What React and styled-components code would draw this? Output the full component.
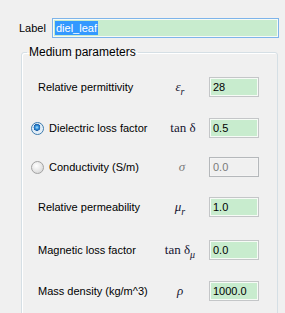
import React from 'react';
import styled, { createGlobalStyle } from 'styled-components';

const Global = createGlobalStyle`
  html, body {
    margin: 0;
    background: #f0f0f0;
  }
  body {
    font-family: "Liberation Sans", Arial, sans-serif;
    font-size: 11px;
    color: #000;
  }
`;

const Page = styled.div`
  padding-top: 18px;
  width: 285px;
`;

const LabelRow = styled.div`
  display: grid;
  grid-template-columns: 33px 227px;
  align-items: center;
  padding-left: 19px;
`;

const Field = styled.div`
  box-sizing: border-box;
  height: 20px;
  display: flex;
  align-items: center;
  padding-left: ${(p) => (p.$focus ? '2px' : '3px')};
  border: 1px solid ${(p) => (p.$focus ? '#7eb4ea' : p.$disabled ? '#b5b8bb' : '#c4c6c8')};
  box-shadow: inset 0 0 0 1px ${(p) => (p.$disabled ? '#f4f4f4' : '#f6fbf6')};
  background: ${(p) => (p.$disabled ? '#f0f0f0' : '#c8ecce')};
  color: ${(p) => (p.$disabled ? '#7a7a7a' : '#000')};
  white-space: nowrap;
`;

const Selected = styled.span`
  background: #3399ff;
  color: #fff;
  padding: 0 1px;
  line-height: 14px;
`;

const Group = styled.fieldset`
  margin: 7px 0 0 21px;
  width: 257px;
  box-sizing: border-box;
  min-width: 0;
  border: 1px solid #d5dfe5;
  border-radius: 3px;
  box-shadow: inset 1px 1px 0 #fff;
  padding: 18px 9px 60px 9px;
`;

const Legend = styled.legend`
  font-size: 12px;
  line-height: 14px;
  padding: 0 2px;
  margin-left: -4px;
`;

const Row = styled.div`
  display: grid;
  grid-template-columns: 129px 40px 59px;
  column-gap: 0;
  align-items: center;
  height: 20px;
  margin-top: ${(p) => p.$space}px;
  & > :last-child {
    margin-left: 9px;
  }
`;

const Caption = styled.div`
  display: flex;
  align-items: center;
  gap: 5px;
  padding-left: ${(p) => (p.$radio ? 0 : 7)}px;
  white-space: nowrap;
`;

const Radio = styled.span`
  box-sizing: border-box;
  width: 13px;
  height: 13px;
  border-radius: 50%;
  border: 1px solid ${(p) => (p.$checked ? '#3d7bad' : '#a2a2a2')};
  background: ${(p) =>
    p.$checked
      ? 'radial-gradient(circle at 45% 40%, #a9e1ff 0, #2b8ad6 22%, #1f5fa6 36%, #dbe9f5 40%, #f4f8fb 100%)'
      : 'radial-gradient(circle at 40% 35%, #ffffff 0, #eaeaea 45%, #cfcfcf 100%)'};
  flex: none;
`;

const Sym = styled.div`
  text-align: center;
  font-family: "Liberation Serif", "Times New Roman", serif;
  font-size: 13px;
  color: ${(p) => (p.$dim ? '#7a7a7a' : '#151530')};
  white-space: nowrap;
  padding-left: ${(p) => p.$shift || 0}px;
  & i {
    font-style: italic;
  }
  & sub {
    font-size: 10px;
    font-style: italic;
    line-height: 0;
    vertical-align: -4px;
  }
`;

const rows = [
  {
    label: 'Relative permittivity',
    sym: <Sym><i>ε</i><sub>r</sub></Sym>,
    value: '28',
    space: 0,
  },
  {
    radio: true,
    checked: true,
    label: 'Dielectric loss factor',
    sym: <Sym $shift={6}>tan δ</Sym>,
    value: '0.5',
    space: 21,
  },
  {
    radio: true,
    checked: false,
    label: 'Conductivity (S/m)',
    sym: <Sym $dim $shift={4}><i>σ</i></Sym>,
    value: '0.0',
    disabled: true,
    space: 19,
  },
  {
    label: 'Relative permeability',
    sym: <Sym><i>μ</i><sub>r</sub></Sym>,
    value: '1.0',
    space: 20,
  },
  {
    label: 'Magnetic loss factor',
    sym: <Sym>tan δ<sub>μ</sub></Sym>,
    value: '0.0',
    space: 23,
  },
  {
    label: 'Mass density (kg/m^3)',
    sym: <Sym><i>ρ</i></Sym>,
    value: '1000.0',
    space: 21,
  },
];

export default function App() {
  return (
    <Page>
      <Global />
      <LabelRow>
        <span>Label</span>
        <Field $focus>
          <Selected>diel_leaf</Selected>
        </Field>
      </LabelRow>
      <Group>
        <Legend>Medium parameters</Legend>
        {rows.map((r) => (
          <Row key={r.label} $space={r.space}>
            <Caption $radio={r.radio}>
              {r.radio && <Radio $checked={r.checked} />}
              <span>{r.label}</span>
            </Caption>
            {r.sym}
            <Field $disabled={r.disabled}>{r.value}</Field>
          </Row>
        ))}
      </Group>
    </Page>
  );
}
